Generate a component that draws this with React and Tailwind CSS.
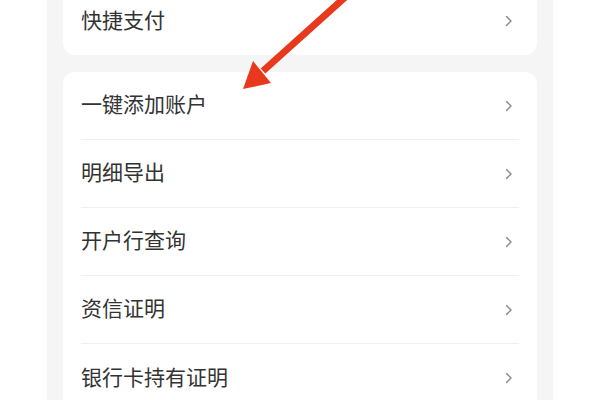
const topItems = ["快捷支付"];
const mainItems = ["一键添加账户", "明细导出", "开户行查询", "资信证明", "银行卡持有证明"];

const Chevron = () => (
  <svg width="8" height="12" viewBox="0 0 8 12" fill="none">
    <path d="M1.5 1.5L6 6l-4.5 4.5" stroke="#8a8a8a" strokeWidth="1.4" strokeLinecap="round" strokeLinejoin="round" />
  </svg>
);

const Row = ({ label, last }) => (
  <div className="px-[18px]">
    <div
      className={`h-[68px] flex items-center justify-between pr-[6px] ${
        last ? "" : "border-b border-[#f0f0f0]"
      }`}
    >
      <span className="pb-[4px] text-[21px] text-[#333333] leading-none">{label}</span>
      <Chevron />
    </div>
  </div>
);

const Card = ({ items, className = "" }) => (
  <div className={`bg-white rounded-[12px] ${className}`}>
    {items.map((label, i) => (
      <Row key={label} label={label} last={i === items.length - 1} />
    ))}
  </div>
);

export default function App() {
  return (
    <div
      className="relative w-[600px] h-[400px] overflow-hidden bg-white"
      style={{ fontFamily: '"Noto Sans CJK SC", "Noto Sans", sans-serif' }}
    >
      <div className="mx-[47px] h-full flex flex-col bg-[#f5f5f5] px-[16px]">
        <div className="-mt-[13px] flex flex-col gap-[17px]">
          <Card items={topItems} />
          <Card items={mainItems} />
        </div>
      </div>

      {/* red annotation arrow */}
      <svg className="absolute left-0 top-0" width="600" height="400" viewBox="0 0 600 400">
        <line x1="352" y1="-9" x2="263" y2="71" stroke="#e8391c" strokeWidth="7" />
        <polygon points="243,89 253,61 271,83" fill="#e8391c" />
      </svg>
    </div>
  );
}
